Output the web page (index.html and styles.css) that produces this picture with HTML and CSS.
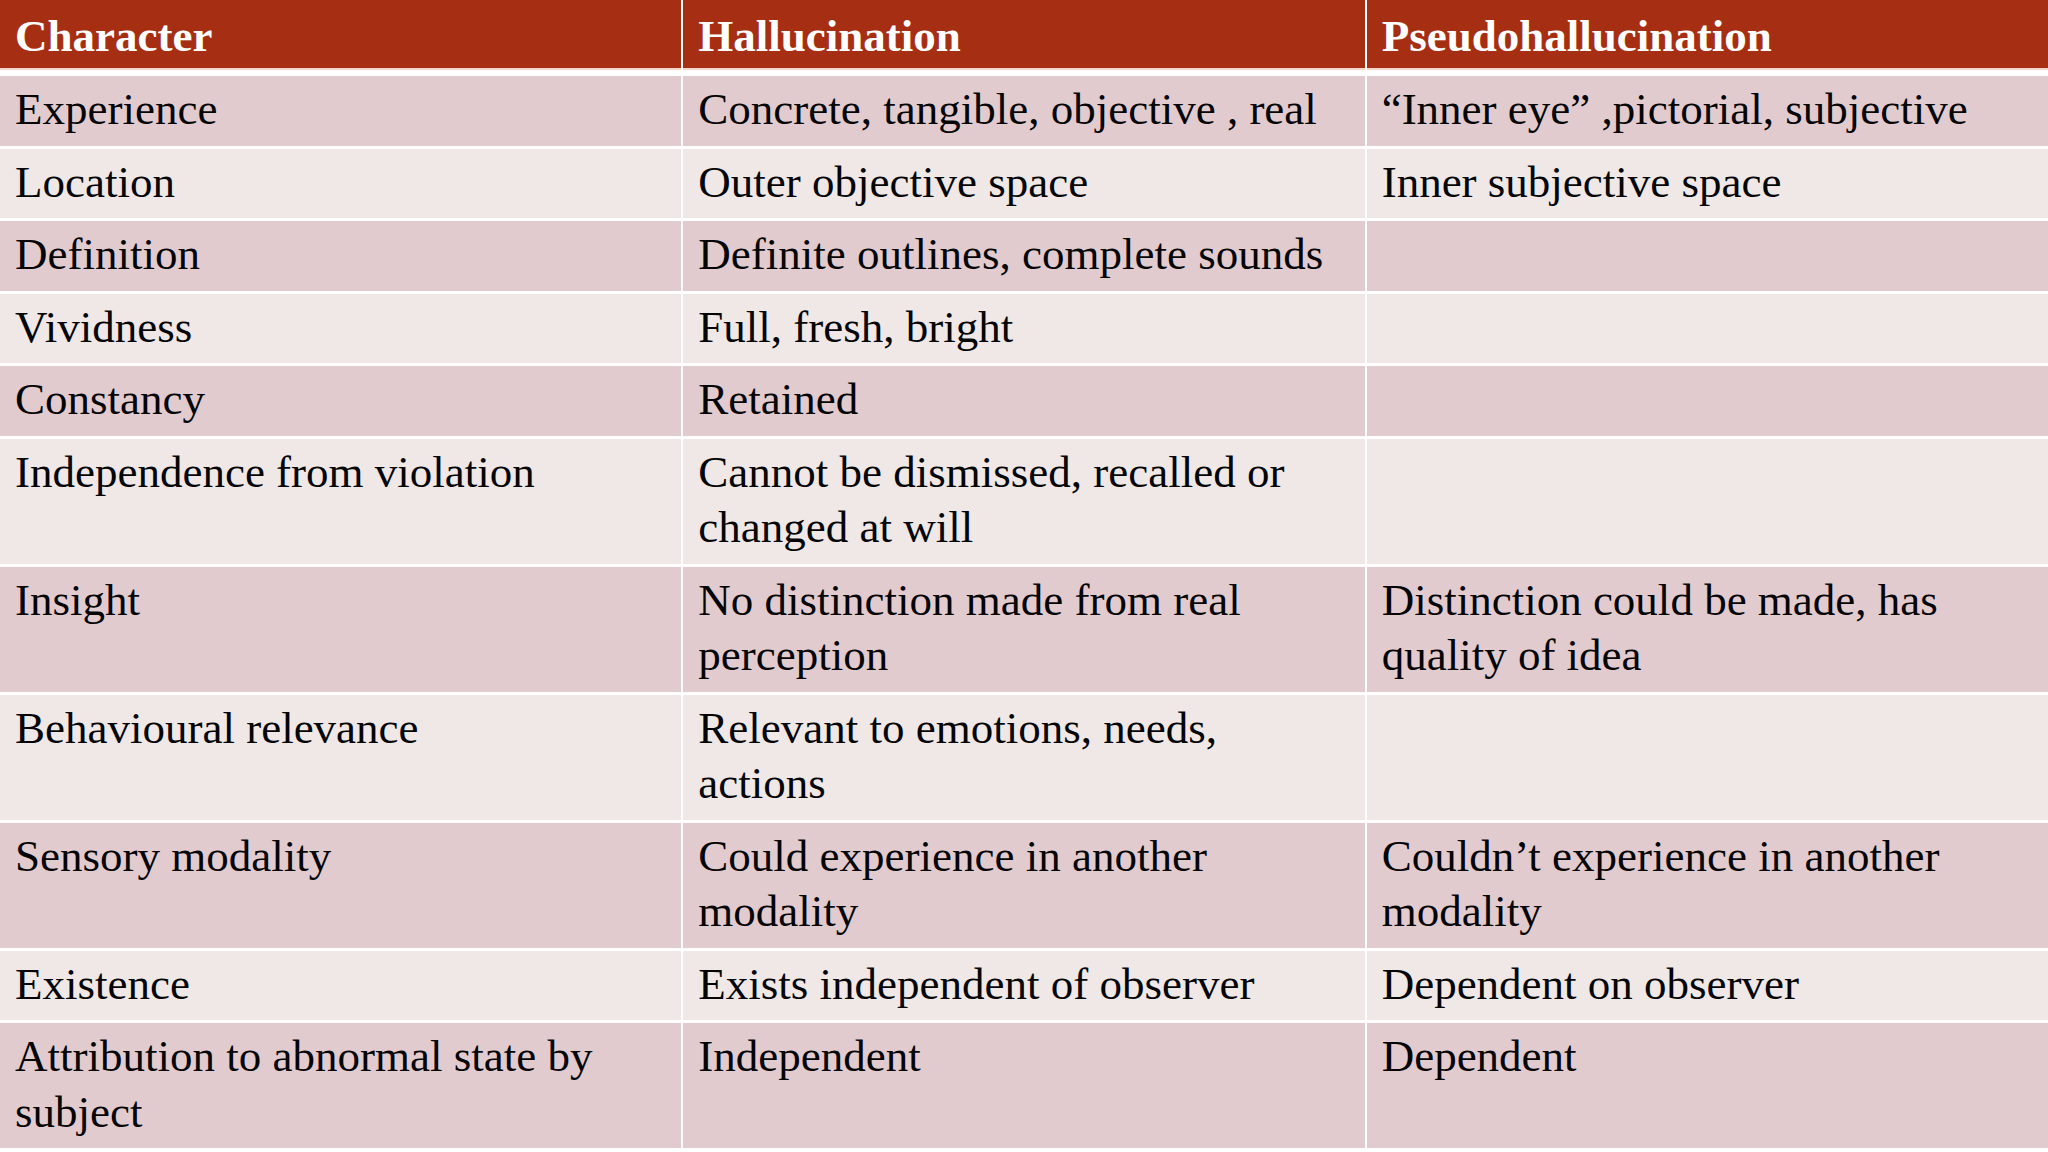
FILE: index.html
```html
<!DOCTYPE html>
<html lang="en">
<head>
<meta charset="utf-8">
<title>Hallucination vs Pseudohallucination</title>
<link rel="stylesheet" href="styles.css">
</head>
<body>
<div class="table">
  <div class="cell head">Character</div>
  <div class="cell head">Hallucination</div>
  <div class="cell head">Pseudohallucination</div>

  <div class="cell odd">Experience</div>
  <div class="cell odd">Concrete, tangible, objective , real</div>
  <div class="cell odd">“Inner eye” ,pictorial, subjective</div>

  <div class="cell even">Location</div>
  <div class="cell even">Outer objective space</div>
  <div class="cell even">Inner subjective space</div>

  <div class="cell odd">Definition</div>
  <div class="cell odd">Definite outlines, complete sounds</div>
  <div class="cell odd"></div>

  <div class="cell even">Vividness</div>
  <div class="cell even">Full, fresh, bright</div>
  <div class="cell even"></div>

  <div class="cell odd">Constancy</div>
  <div class="cell odd">Retained</div>
  <div class="cell odd"></div>

  <div class="cell even">Independence from violation</div>
  <div class="cell even">Cannot be dismissed, recalled or changed at will</div>
  <div class="cell even"></div>

  <div class="cell odd">Insight</div>
  <div class="cell odd">No distinction made from real perception</div>
  <div class="cell odd">Distinction could be made, has quality of idea</div>

  <div class="cell even">Behavioural relevance</div>
  <div class="cell even">Relevant to emotions, needs, actions</div>
  <div class="cell even"></div>

  <div class="cell odd">Sensory modality</div>
  <div class="cell odd">Could experience in another modality</div>
  <div class="cell odd">Couldn’t experience in another modality</div>

  <div class="cell even">Existence</div>
  <div class="cell even">Exists independent of observer</div>
  <div class="cell even">Dependent on observer</div>

  <div class="cell odd">Attribution to abnormal state by subject</div>
  <div class="cell odd">Independent</div>
  <div class="cell odd">Dependent</div>
</div>
</body>
</html>
```

FILE: styles.css
```css
html, body {
  margin: 0;
  padding: 0;
  background: #ffffff;
}

body {
  width: 2048px;
  height: 1152px;
  overflow: hidden;
  font-family: "Liberation Serif", "Times New Roman", serif;
}

.table {
  display: grid;
  grid-template-columns: repeat(3, 1fr);
  column-gap: 2px;
  row-gap: 3px;
}

.cell {
  font-size: 45px;
  line-height: 55.5px;
  color: #050505;
  padding: 6px 20px 8px 15px;
}

.head {
  background: #a62f13;
  color: #ffffff;
  font-weight: bold;
  padding-top: 9px;
  padding-bottom: 3.5px;
  border-bottom: 2px solid #f3d6c9;
  margin-bottom: 3px;
}

.odd {
  background: #e2cbce;
}

.even {
  background: #efe8e7;
}
```
